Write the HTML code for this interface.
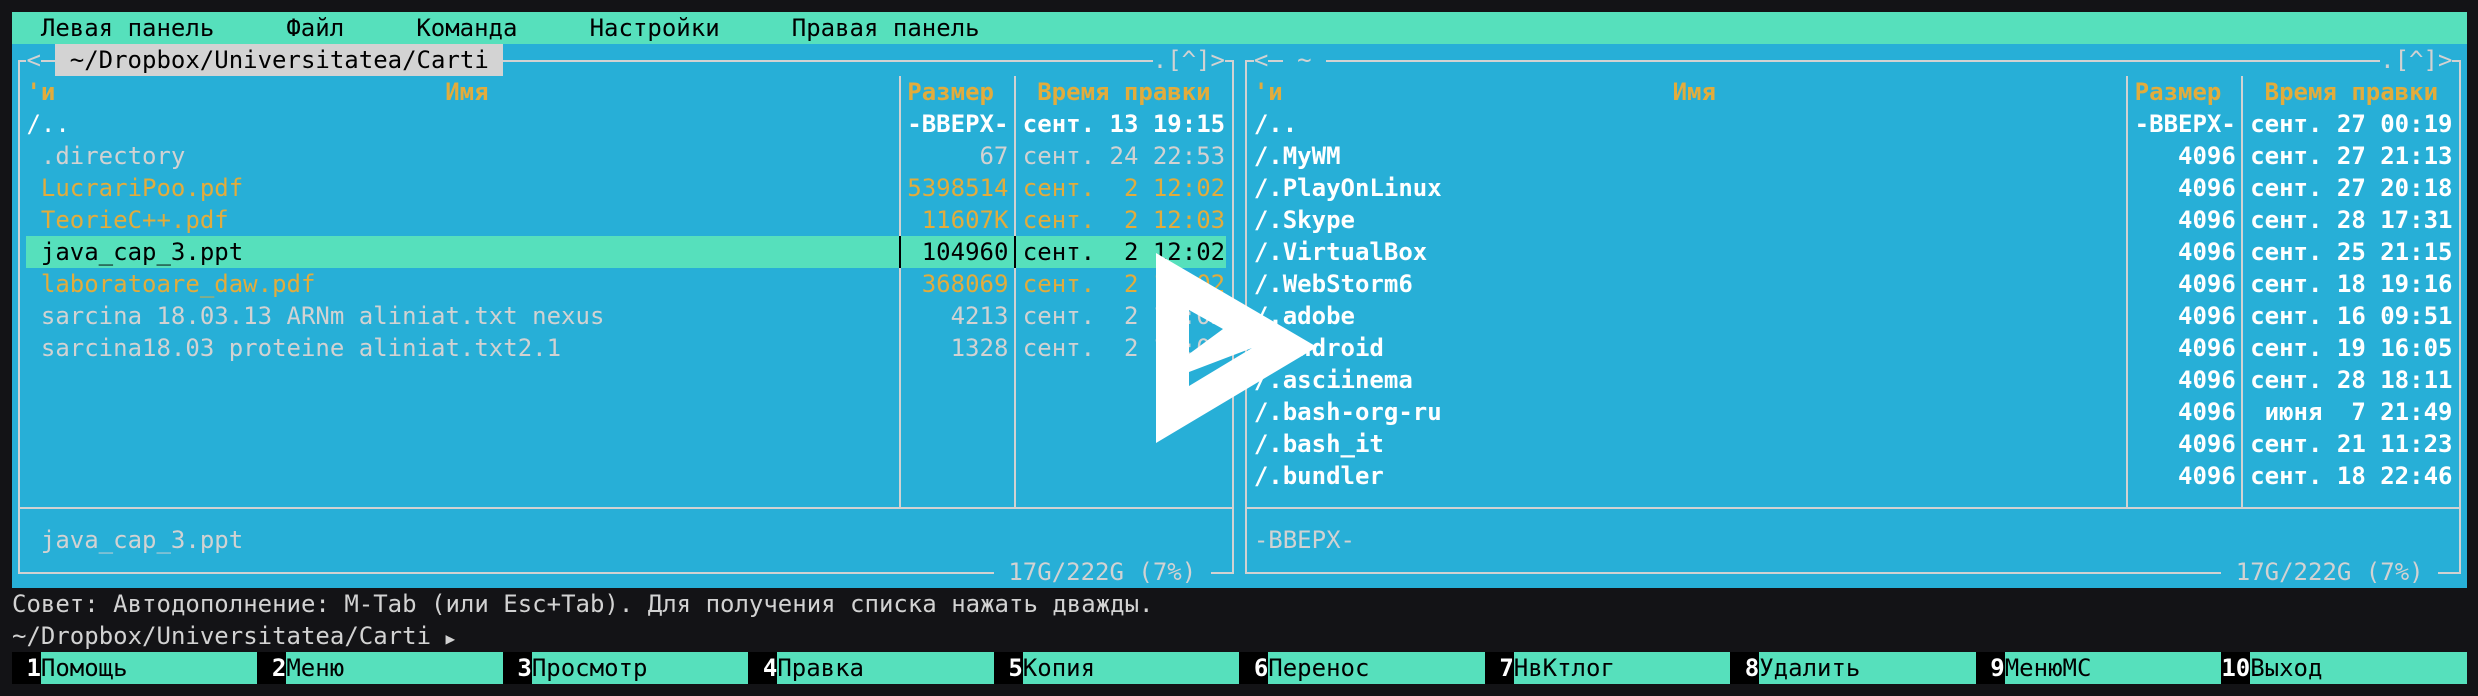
<!DOCTYPE html>
<html><head><meta charset="utf-8"><style>
body{margin:0;background:#131316;width:2478px;height:696px;overflow:hidden;position:relative}
.t{position:absolute;white-space:pre;font-family:"DejaVu Sans Mono","Liberation Mono",monospace;font-size:24px;line-height:32px;height:32px;left:calc(12px + var(--c)*14.44px);top:calc(12px + var(--r)*32px);color:#d2d2d2}
.bx{position:absolute}
.b{font-weight:bold}
.w{color:#fff}.o{color:#e2ac3c}.k{color:#000}.g{color:#d2d2d2}
.bb{background:#27afd7}
.hl{position:absolute;height:2px;background:#d2d2d2}
.vl{position:absolute;width:2px;background:#d2d2d2}
</style></head><body>
<div class="bx" style="left:12px;top:12px;width:2455px;height:32px;background:#56e0bc"></div>
<div class="t k" style="--c:2;--r:0">Левая панель</div>
<div class="t k" style="--c:19;--r:0">Файл</div>
<div class="t k" style="--c:28;--r:0">Команда</div>
<div class="t k" style="--c:40;--r:0">Настройки</div>
<div class="t k" style="--c:54;--r:0">Правая панель</div>
<div class="bx" style="left:12px;top:44px;width:2455px;height:544px;background:#27afd7"></div>
<div class="hl" style="left:18px;top:60px;width:1216px"></div>
<div class="hl" style="left:18px;top:572px;width:1216px"></div>
<div class="hl" style="left:18px;top:507px;width:1216px"></div>
<div class="vl" style="left:18px;top:60px;height:514px"></div>
<div class="vl" style="left:1232px;top:60px;height:514px"></div>
<div class="vl" style="left:899px;top:76px;height:432px"></div>
<div class="vl" style="left:1014px;top:76px;height:432px"></div>
<div class="hl" style="left:1245px;top:60px;width:1216px"></div>
<div class="hl" style="left:1245px;top:572px;width:1216px"></div>
<div class="hl" style="left:1245px;top:507px;width:1216px"></div>
<div class="vl" style="left:1245px;top:60px;height:514px"></div>
<div class="vl" style="left:2459px;top:60px;height:514px"></div>
<div class="vl" style="left:2126px;top:76px;height:432px"></div>
<div class="vl" style="left:2241px;top:76px;height:432px"></div>
<div class="bx" style="left:26px;top:236px;width:1200px;height:32px;background:#56e0bc"></div>
<div class="bx" style="left:899px;top:236px;width:2px;height:32px;background:#000"></div>
<div class="bx" style="left:1014px;top:236px;width:2px;height:32px;background:#000"></div>
<div class="t g bb" style="--c:1;--r:1">&lt;</div>
<div class="t k" style="--c:3;--r:1;background:#d3d3d3"> ~/Dropbox/Universitatea/Carti </div>
<div class="t g bb" style="--c:79;--r:1">.[^]&gt;</div>
<div class="t g bb" style="--c:86;--r:1">&lt;</div>
<div class="t g bb" style="--c:88;--r:1"> ~ </div>
<div class="t g bb" style="--c:164;--r:1">.[^]&gt;</div>
<div class="t o b" style="--c:1;--r:2">'и</div>
<div class="t o b" style="--c:30;--r:2">Имя</div>
<div class="t o b" style="--c:62;--r:2">Размер</div>
<div class="t o b" style="--c:71;--r:2">Время правки</div>
<div class="t o b" style="--c:86;--r:2">'и</div>
<div class="t o b" style="--c:115;--r:2">Имя</div>
<div class="t o b" style="--c:147;--r:2">Размер</div>
<div class="t o b" style="--c:156;--r:2">Время правки</div>
<div class="t w" style="--c:1;--r:3">/..</div>
<div class="t w b" style="--c:62;--r:3">-ВВЕРХ-</div>
<div class="t w b" style="--c:70;--r:3">сент. 13 19:15</div>
<div class="t g" style="--c:2;--r:4">.directory</div>
<div class="t g" style="--c:67;--r:4">67</div>
<div class="t g" style="--c:70;--r:4">сент. 24 22:53</div>
<div class="t o" style="--c:2;--r:5">LucrariPoo.pdf</div>
<div class="t o" style="--c:62;--r:5">5398514</div>
<div class="t o" style="--c:70;--r:5">сент.  2 12:02</div>
<div class="t o" style="--c:2;--r:6">TeorieC++.pdf</div>
<div class="t o" style="--c:63;--r:6">11607K</div>
<div class="t o" style="--c:70;--r:6">сент.  2 12:03</div>
<div class="t k" style="--c:2;--r:7">java_cap_3.ppt</div>
<div class="t k" style="--c:63;--r:7">104960</div>
<div class="t k" style="--c:70;--r:7">сент.  2 12:02</div>
<div class="t o" style="--c:2;--r:8">laboratoare_daw.pdf</div>
<div class="t o" style="--c:63;--r:8">368069</div>
<div class="t o" style="--c:70;--r:8">сент.  2 12:02</div>
<div class="t g" style="--c:2;--r:9">sarcina 18.03.13 ARNm aliniat.txt nexus</div>
<div class="t g" style="--c:65;--r:9">4213</div>
<div class="t g" style="--c:70;--r:9">сент.  2 12:02</div>
<div class="t g" style="--c:2;--r:10">sarcina18.03 proteine aliniat.txt2.1</div>
<div class="t g" style="--c:65;--r:10">1328</div>
<div class="t g" style="--c:70;--r:10">сент.  2 12:02</div>
<div class="t g" style="--c:2;--r:16">java_cap_3.ppt</div>
<div class="t g bb" style="--c:68;--r:17"> 17G/222G (7%) </div>
<div class="t w b" style="--c:86;--r:3">/..</div>
<div class="t w b" style="--c:147;--r:3">-ВВЕРХ-</div>
<div class="t w b" style="--c:155;--r:3">сент. 27 00:19</div>
<div class="t w b" style="--c:86;--r:4">/.MyWM</div><div class="t w b" style="--c:150;--r:4">4096</div><div class="t w b" style="--c:155;--r:4">сент. 27 21:13</div>
<div class="t w b" style="--c:86;--r:5">/.PlayOnLinux</div><div class="t w b" style="--c:150;--r:5">4096</div><div class="t w b" style="--c:155;--r:5">сент. 27 20:18</div>
<div class="t w b" style="--c:86;--r:6">/.Skype</div><div class="t w b" style="--c:150;--r:6">4096</div><div class="t w b" style="--c:155;--r:6">сент. 28 17:31</div>
<div class="t w b" style="--c:86;--r:7">/.VirtualBox</div><div class="t w b" style="--c:150;--r:7">4096</div><div class="t w b" style="--c:155;--r:7">сент. 25 21:15</div>
<div class="t w b" style="--c:86;--r:8">/.WebStorm6</div><div class="t w b" style="--c:150;--r:8">4096</div><div class="t w b" style="--c:155;--r:8">сент. 18 19:16</div>
<div class="t w b" style="--c:86;--r:9">/.adobe</div><div class="t w b" style="--c:150;--r:9">4096</div><div class="t w b" style="--c:155;--r:9">сент. 16 09:51</div>
<div class="t w b" style="--c:86;--r:10">/.android</div><div class="t w b" style="--c:150;--r:10">4096</div><div class="t w b" style="--c:155;--r:10">сент. 19 16:05</div>
<div class="t w b" style="--c:86;--r:11">/.asciinema</div><div class="t w b" style="--c:150;--r:11">4096</div><div class="t w b" style="--c:155;--r:11">сент. 28 18:11</div>
<div class="t w b" style="--c:86;--r:12">/.bash-org-ru</div><div class="t w b" style="--c:150;--r:12">4096</div><div class="t w b" style="--c:155;--r:12"> июня  7 21:49</div>
<div class="t w b" style="--c:86;--r:13">/.bash_it</div><div class="t w b" style="--c:150;--r:13">4096</div><div class="t w b" style="--c:155;--r:13">сент. 21 11:23</div>
<div class="t w b" style="--c:86;--r:14">/.bundler</div><div class="t w b" style="--c:150;--r:14">4096</div><div class="t w b" style="--c:155;--r:14">сент. 18 22:46</div>
<div class="t g" style="--c:86;--r:16">-ВВЕРХ-</div>
<div class="t g bb" style="--c:153;--r:17"> 17G/222G (7%) </div>
<div class="t g" style="--c:0;--r:18">Совет: Автодополнение: M-Tab (или Esc+Tab). Для получения списка нажать дважды.</div>
<div class="t g" style="--c:0;--r:19">~/Dropbox/Universitatea/Carti <span style="font-size:16px">▶</span></div>
<div class="bx" style="left:12px;top:652px;width:2455px;height:32px;background:#000"></div>
<div class="bx" style="left:40.9px;top:652px;width:216.6px;height:32px;background:#56e0bc"></div>
<div class="bx" style="left:286.4px;top:652px;width:216.6px;height:32px;background:#56e0bc"></div>
<div class="bx" style="left:531.9px;top:652px;width:216.6px;height:32px;background:#56e0bc"></div>
<div class="bx" style="left:777.4px;top:652px;width:216.6px;height:32px;background:#56e0bc"></div>
<div class="bx" style="left:1022.8px;top:652px;width:216.6px;height:32px;background:#56e0bc"></div>
<div class="bx" style="left:1268.3px;top:652px;width:216.6px;height:32px;background:#56e0bc"></div>
<div class="bx" style="left:1513.8px;top:652px;width:216.6px;height:32px;background:#56e0bc"></div>
<div class="bx" style="left:1759.3px;top:652px;width:216.6px;height:32px;background:#56e0bc"></div>
<div class="bx" style="left:2004.8px;top:652px;width:216.6px;height:32px;background:#56e0bc"></div>
<div class="bx" style="left:2250.2px;top:652px;width:216.8px;height:32px;background:#56e0bc"></div>
<div class="t w b" style="--c:1;--r:20">1</div><div class="t k" style="--c:2;--r:20">Помощь</div>
<div class="t w b" style="--c:18;--r:20">2</div><div class="t k" style="--c:19;--r:20">Меню</div>
<div class="t w b" style="--c:35;--r:20">3</div><div class="t k" style="--c:36;--r:20">Просмотр</div>
<div class="t w b" style="--c:52;--r:20">4</div><div class="t k" style="--c:53;--r:20">Правка</div>
<div class="t w b" style="--c:69;--r:20">5</div><div class="t k" style="--c:70;--r:20">Копия</div>
<div class="t w b" style="--c:86;--r:20">6</div><div class="t k" style="--c:87;--r:20">Перенос</div>
<div class="t w b" style="--c:103;--r:20">7</div><div class="t k" style="--c:104;--r:20">НвКтлог</div>
<div class="t w b" style="--c:120;--r:20">8</div><div class="t k" style="--c:121;--r:20">Удалить</div>
<div class="t w b" style="--c:137;--r:20">9</div><div class="t k" style="--c:138;--r:20">МенюMC</div>
<div class="t w b" style="--c:153;--r:20">10</div><div class="t k" style="--c:155;--r:20">Выход</div>
<svg class="bx" style="left:0;top:0" width="2478" height="696"><path fill="#fff" fill-rule="evenodd" d="M1156 253 L1317 347 L1156 443 Z M1189 310 L1223 329 L1189 354 Z M1189 372 L1252 348 L1189 386 Z"/></svg>
</body></html>
